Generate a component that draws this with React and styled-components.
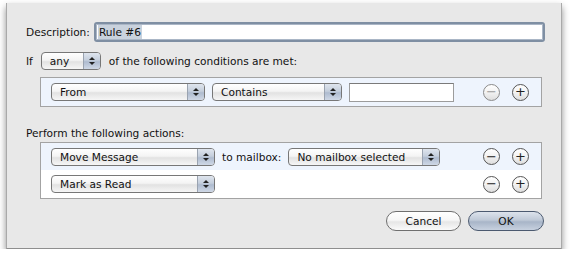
import React from 'react';
import styled, { createGlobalStyle, css } from 'styled-components';

const GlobalStyle = createGlobalStyle`
  body {
    margin: 0;
    background: #fff;
    font-family: "DejaVu Sans", "Liberation Sans", sans-serif;
    font-size: 10.6px;
    color: #111;
  }
`;

const Sheet = styled.div`
  box-sizing: border-box;
  margin: 3px 0 0 6px;
  width: 556px;
  height: 246px;
  background: #e8e8e8;
  border-left: 1px solid #a9a9a9;
  border-right: 1px solid #a9a9a9;
  border-bottom: 1px solid #8e8e8e;
  box-shadow: 0 4px 7px rgba(0, 0, 0, 0.45);
  display: flex;
  flex-direction: column;
  padding: 19px 16px 0 19px;
`;

const Row = styled.div`
  display: flex;
  align-items: center;
  height: ${p => p.h || 18}px;
  margin-top: ${p => p.mt || 0}px;
  gap: ${p => p.gap || 0}px;
`;

const Label = styled.span`
  white-space: nowrap;
  margin: 0 ${p => p.mx || 0}px;
`;

const DescInput = styled.div`
  box-sizing: border-box;
  flex: 1;
  height: 20px;
  margin-left: 4px;
  background: #fff;
  border: 2px solid #7f8fa3;
  border-radius: 3px;
  box-shadow: inset 0 0 0 1px #aab6c6;
  display: flex;
  align-items: center;
  padding-left: 2px;
`;

const Selected = styled.span`
  background: #c9d2dd;
  padding: 1px 1px;
`;

const PopupWrap = styled.div`
  box-sizing: border-box;
  width: ${p => p.w}px;
  height: 18px;
  margin-left: ${p => p.ml || 0}px;
  border: 1px solid #777;
  border-radius: 4px;
  display: flex;
  overflow: hidden;
  background: linear-gradient(#ffffff, #f4f4f4 45%, #e2e2e2 55%, #f6f6f6);
  flex-shrink: 0;
`;

const PopupText = styled.span`
  flex: 1;
  padding-left: 8px;
  line-height: 16px;
  white-space: nowrap;
`;

const Arrows = styled.span`
  width: 16px;
  border-left: 1px solid #9aa3b0;
  background: linear-gradient(#dfe5ee, #c4cedc 45%, #aebbcf 55%, #cfd8e6);
  display: flex;
  flex-direction: column;
  align-items: center;
  justify-content: center;
  gap: 2px;
`;

const Tri = styled.span`
  width: 0;
  height: 0;
  border-left: 3px solid transparent;
  border-right: 3px solid transparent;
  ${p => p.down
    ? css`border-top: 3px solid #222;`
    : css`border-bottom: 3px solid #222;`}
`;

const Popup = ({ w, ml, children }) => (
  <PopupWrap w={w} ml={ml}>
    <PopupText>{children}</PopupText>
    <Arrows><Tri /><Tri down /></Arrows>
  </PopupWrap>
);

const Box = styled.div`
  box-sizing: border-box;
  margin-left: 14px;
  margin-top: ${p => p.mt}px;
  width: 502px;
  border: 1px solid #a3a3a3;
  background: #fff;
`;

const BoxRow = styled.div`
  display: flex;
  align-items: center;
  height: ${p => p.h}px;
  padding: 0 12px 0 10px;
  background: ${p => (p.alt ? '#eef4fd' : '#fff')};
`;

const TextField = styled.div`
  box-sizing: border-box;
  width: 105px;
  height: 19px;
  margin-left: 7px;
  background: #fff;
  border: 1px solid #9c9c9c;
  border-top-color: #7a7a7a;
`;

const Spacer = styled.div`
  flex: 1;
`;

const Circle = styled.div`
  box-sizing: border-box;
  width: 17px;
  height: 17px;
  margin-left: ${p => p.ml || 0}px;
  border-radius: 50%;
  border: 1px solid ${p => (p.disabled ? '#8a8a8a' : '#555')};
  background: linear-gradient(#ffffff, #f2f2f2 50%, #dedede);
  display: flex;
  align-items: center;
  justify-content: center;
  font-family: "DejaVu Sans", sans-serif;
  font-size: 13px;
  line-height: 1;
  color: ${p => (p.disabled ? '#9a9a9a' : '#222')};
  padding-bottom: 1px;
`;

const ButtonBar = styled.div`
  display: flex;
  justify-content: flex-end;
  gap: 7px;
  margin-top: 12px;
  padding-right: 1px;
`;

const PushButton = styled.div`
  box-sizing: border-box;
  width: ${p => p.w}px;
  height: 20px;
  border-radius: 10px;
  border: 1px solid ${p => (p.primary ? '#4c5a70' : '#6f6f6f')};
  background: ${p => (p.primary
    ? 'linear-gradient(#dde3ec, #bfc9d7 45%, #a8b5c8 55%, #c7d1df)'
    : 'linear-gradient(#ffffff, #f7f7f7 45%, #e6e6e6 55%, #fafafa)')};
  display: flex;
  align-items: center;
  justify-content: center;
  padding-bottom: 1px;
`;

export default function App() {
  return (
    <>
      <GlobalStyle />
      <Sheet>
        <Row h={20}>
          <Label>Description:</Label>
          <DescInput><Selected>Rule #6</Selected></DescInput>
        </Row>
        <Row mt={10} gap={8}>
          <Label>If</Label>
          <Popup w={60}>any</Popup>
          <Label>of the following conditions are met:</Label>
        </Row>
        <Box mt={7}>
          <BoxRow h={28} alt>
            <Popup w={154}>From</Popup>
            <Popup w={130} ml={7}>Contains</Popup>
            <TextField />
            <Spacer />
            <Circle disabled>−</Circle>
            <Circle ml={12}>+</Circle>
          </BoxRow>
        </Box>
        <Row h={14} mt={19}>
          <Label>Perform the following actions:</Label>
        </Row>
        <Box mt={2}>
          <BoxRow h={27} alt>
            <Popup w={164}>Move Message</Popup>
            <Label mx={7}>to mailbox:</Label>
            <Popup w={152}>No mailbox selected</Popup>
            <Spacer />
            <Circle>−</Circle>
            <Circle ml={12}>+</Circle>
          </BoxRow>
          <BoxRow h={28}>
            <Popup w={164}>Mark as Read</Popup>
            <Spacer />
            <Circle>−</Circle>
            <Circle ml={12}>+</Circle>
          </BoxRow>
        </Box>
        <ButtonBar>
          <PushButton w={75}>Cancel</PushButton>
          <PushButton w={76} primary>OK</PushButton>
        </ButtonBar>
      </Sheet>
    </>
  );
}
